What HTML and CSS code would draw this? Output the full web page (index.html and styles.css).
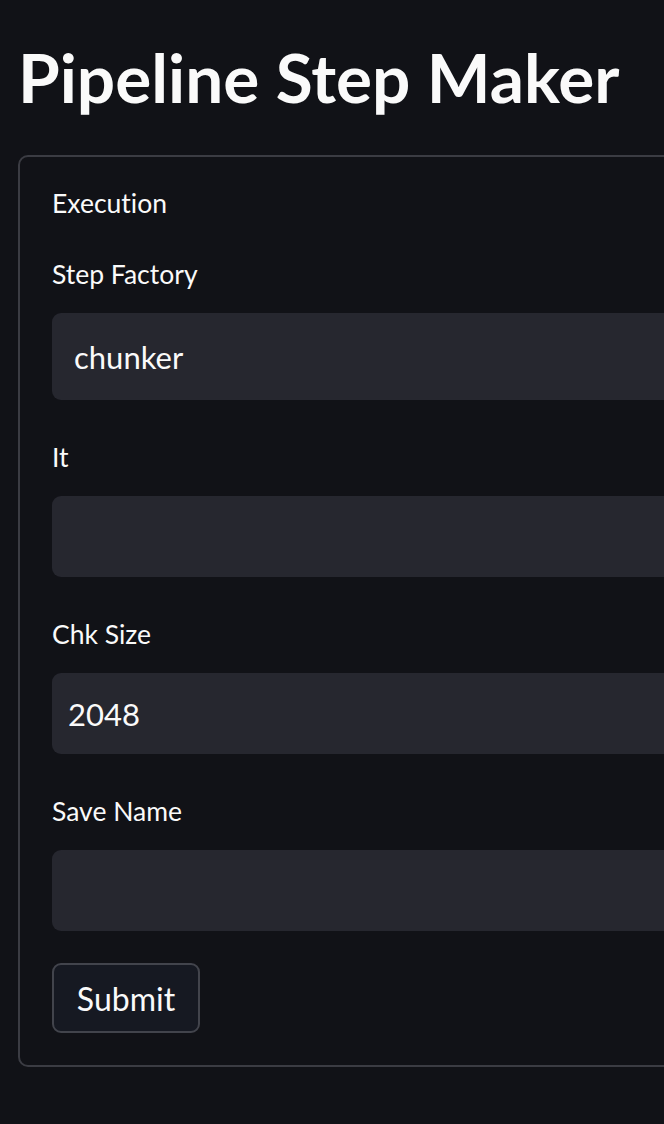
FILE: index.html
```html
<!DOCTYPE html>
<html lang="en">
<head>
<meta charset="utf-8">
<title>Pipeline Step Maker</title>
<link rel="stylesheet" href="styles.css">
</head>
<body>
<main class="app">
  <h1 class="title">Pipeline Step Maker</h1>
  <form class="form">
    <div class="section">Execution</div>
    <label class="label">Step Factory</label>
    <div class="select"><span class="select-value">chunker</span></div>
    <label class="label">It</label>
    <div class="input"></div>
    <label class="label">Chk Size</label>
    <div class="input"><span class="input-value">2048</span></div>
    <label class="label">Save Name</label>
    <div class="input"></div>
    <button type="button" class="submit">Submit</button>
  </form>
</main>
</body>
</html>
```

FILE: styles.css
```css
html, body {
  margin: 0;
  padding: 0;
  overflow: hidden;
  background: #111217;
}
body {
  width: 664px;
  height: 1124px;
  font-family: "Lato", "Open Sans", sans-serif;
  font-variant-ligatures: none;
  color: #fafafa;
}
.app {
  padding: 0 0 0 18px;
}
.title {
  margin: 0;
  padding: 37px 0 0 0;
  height: 155px;
  box-sizing: border-box;
  font-size: 67.5px;
  line-height: 80px;
  font-weight: 700;
  letter-spacing: 0;
  white-space: nowrap;
}
.form {
  display: flex;
  flex-direction: column;
  align-items: flex-start;
  width: 900px;
  box-sizing: border-box;
  border: 2px solid #3b3c43;
  border-radius: 10px;
  padding: 32px 32px 32px 32px;
}
.section, .label {
  font-size: 26.5px;
  line-height: 28px;
  height: 28px;
  display: block;
}
.label {
  margin-top: 43px;
  margin-bottom: 25px;
}
.select, .input {
  align-self: stretch;
  background: #26272f;
  border-radius: 9px;
  display: flex;
  align-items: center;
  font-size: 31px;
}
.select {
  height: 87px;
  padding-left: 22px;
}
.input {
  height: 81px;
  padding-left: 16px;
}
.submit {
  margin-top: 32px;
  width: 148px;
  height: 70px;
  background: #161922;
  border: 2px solid #42444c;
  border-radius: 9px;
  color: #fafafa;
  font-family: inherit;
  font-size: 32px;
  padding: 0;
}
```
